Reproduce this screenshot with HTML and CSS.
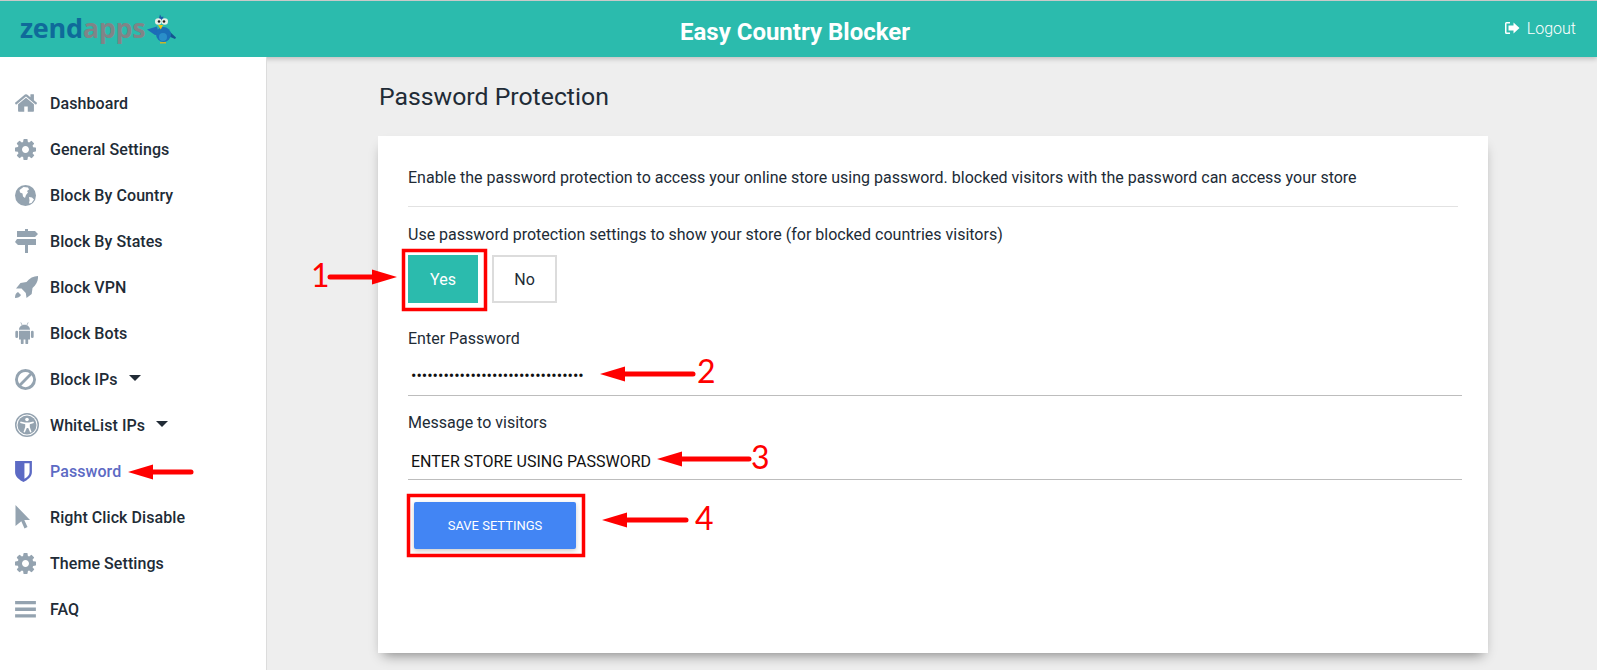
FILE: index.html
```html
<!DOCTYPE html>
<html lang="en">
<head>
    <meta charset="UTF-8">
    <meta name="viewport" content="width=device-width, initial-scale=1.0">
    <title>Easy Country Blocker</title>
    <link rel="stylesheet" href="styles.css">
</head>
<body>
    <header class="topbar">
        <a class="logo" href="#">
            <span class="logo-zend">zend</span><span class="logo-apps">apps</span>
            <svg class="logo-bird" viewBox="0 0 30 30" width="30" height="30">
                <path d="M14 .5l1.500 2.500 2-.5-1 3.500h-4z" fill="#1c5fa8"/>
                <path d="M1 15.500l10-3 2 8-4 .5z" fill="#1c6cb8"/>
                <path d="M22 16l8 7.500-1 1.500-9-4z" fill="#14548f"/>
                <ellipse cx="17.500" cy="20.500" rx="7.500" ry="7.500" fill="#1b6fb8"/>
                <ellipse cx="17" cy="23" rx="4" ry="4" fill="#2a8fc9"/>
                <path d="M14 28h6v1.500h-6z" fill="#c9b52a"/>
                <circle cx="12.300" cy="7.500" r="3.300" fill="#e8efe8"/>
                <circle cx="18.700" cy="7.500" r="3.300" fill="#e8efe8"/>
                <circle cx="13" cy="7.500" r="1.300" fill="#222"/>
                <circle cx="18" cy="7.500" r="1.300" fill="#222"/>
                <path d="M12 11h5l-2.200 4.500z" fill="#f1c40f"/>
            </svg>
        </a>
        <h1 class="app-title">Easy Country Blocker</h1>
        <a class="logout" href="#">
            <svg class="logout-icon" viewBox="0 0 16 14" width="16" height="14">
                <path d="M6 1H2.500A1.500 1.500 0 0 0 1 2.500v9A1.500 1.500 0 0 0 2.500 13H6v-1.500H2.500v-9H6z" fill="#fff"/>
                <path d="M9.500 1.500L15.500 7l-6 5.500V9.500H4.500v-5h5z" fill="#fff"/>
            </svg>
            Logout
        </a>
    </header>

    <div class="layout">
        <nav class="sidebar">
            <a class="nav-item" href="#">
                <svg class="nav-icon" width="22" height="18" viewBox="97 256 1598 1280"><path d="M1472 992v480q0 26-19 45t-45 19h-384v-384h-256v384h-384q-26 0-45-19t-19-45v-480q0-1 .5-3t.5-3l575-474 575 474q1 2 1 6zm223-69l-62 74q-8 9-21 11h-3q-13 0-21-7l-692-577-692 577q-12 8-24 7-13-2-21-11l-62-74q-8-10-7-23.500t11-21.500l719-599q32-26 76-26t76 26l244 204v-195q0-14 9-23t23-9h192q14 0 23 9t9 23v408l219 182q10 8 11 21.500t-7 23.500z"/></svg>
                Dashboard
            </a>
            <a class="nav-item" href="#">
                <svg class="nav-icon" width="21" height="21" viewBox="128 128 1536 1536"><path d="M1152 896q0-106-75-181t-181-75-181 75-75 181 75 181 181 75 181-75 75-181zm512-109v222q0 12-8 23t-20 13l-185 28q-19 54-39 91 35 50 107 138 10 12 10 25t-9 23q-27 37-99 108t-94 71q-12 0-26-9l-138-108q-44 23-91 38-16 136-29 186-7 28-36 28h-222q-14 0-24.500-8.500t-11.500-21.500l-28-184q-49-16-90-37l-141 107q-10 9-25 9-14 0-25-11-126-114-165-168-7-10-7-23 0-12 8-23 15-21 51-66.500t54-70.500q-27-50-41-99l-183-27q-13-2-21-12.500t-8-23.500v-222q0-12 8-23t19-13l186-28q14-46 39-92-40-57-107-138-10-12-10-24 0-10 9-23 26-36 98.500-107.500t94.500-71.500q13 0 26 10l138 107q44-23 91-38 16-136 29-186 7-28 36-28h222q14 0 24.500 8.500t11.500 21.500l28 184q49 16 90 37l142-107q9-9 24-9 13 0 25 10 129 119 165 170 7 8 7 22 0 12-8 23-15 21-51 66.500t-54 70.500q26 50 41 98l183 28q13 2 21 12.500t8 23.500z"/></svg>
                General Settings
            </a>
            <a class="nav-item" href="#">
                <svg class="nav-icon" width="21" height="21" viewBox="0 0 21 21"><circle cx="10.500" cy="10.500" r="10.500"/><path d="M4.500 5l4-3 4.500 .5 1 2-2 1.500 1 1.500-2 2.500-1 3-2-1.500-.5-3-2.500-1zM14 12l3 .5 2 2-2.500 3.500-2.500 .5.500-3z" fill="#fff"/></svg>
                Block By Country
            </a>
            <a class="nav-item" href="#">
                <svg class="nav-icon" width="23" height="24" viewBox="0 0 23 24"><path d="M10 0h3v2h7l3 3-3 3H2V2h8zM2 10h19v6H13v8h-3v-8H3l-3-3z"/></svg>
                Block By States
            </a>
            <a class="nav-item" href="#">
                <svg class="nav-icon" width="23" height="22" viewBox="0 0 23 22"><path d="M23 0c.3 4.500-1.500 8.500-5.500 12l-.8 6-5.200 4-.7-5L6.500 12.500 1 12.500 5.500 7l6-1C14.500 2 18.500 0 23 0zM0 22c0-3 .8-5 3-6l3 3c-1 2-3 3-6 3z"/></svg>
                Block VPN
            </a>
            <a class="nav-item" href="#">
                <svg class="nav-icon" width="19" height="22" viewBox="1 0 20 24"><path d="M5 8.500c0-3 2.500-5.500 6-5.500s6 2.500 6 5.500zM5 9.500h12V19h-2v4a1.500 1.500 0 0 1-3 0v-4h-2v4a1.500 1.500 0 0 1-3 0v-4H5zM2.500 9.500A1.500 1.500 0 0 1 4 11v5a1.500 1.500 0 0 1-3 0v-5a1.500 1.500 0 0 1 1.500-1.500zM19.500 9.500A1.500 1.500 0 0 1 21 11v5a1.500 1.500 0 0 1-3 0v-5a1.500 1.500 0 0 1 1.500-1.500z"/><path d="M7 .5l1.500 3M15 .5l-1.500 3" stroke="#94a3b0" stroke-width=".8"/></svg>
                Block Bots
            </a>
            <a class="nav-item" href="#">
                <svg class="nav-icon" width="21" height="21" viewBox="0.500 0.500 21 21"><path fill-rule="evenodd" d="M11 .5a10.500 10.500 0 1 0 0 21 10.500 10.500 0 0 0 0-21zm0 3a7.500 7.500 0 0 1 4.200 1.300L4.800 15.200A7.500 7.500 0 0 1 11 3.500zm6.200 3.300A7.500 7.500 0 0 1 6.800 17.200z"/></svg>
                Block IPs
                <span class="caret"></span>
            </a>
            <a class="nav-item" href="#">
                <svg class="nav-icon" width="24" height="24" viewBox="0 0 24 24"><path fill-rule="evenodd" d="M12 0a12 12 0 1 0 0 24 12 12 0 0 0 0-24zm0 1.500a10.500 10.500 0 1 1 0 21 10.500 10.500 0 0 1 0-21z"/><circle cx="12" cy="12" r="9.500"/><circle cx="12" cy="6.500" r="1.800" fill="#fff"/><path d="M5.500 8.500l4.500 1h4l4.500-1 .4 1.400-4.100 1.300V14l1.700 5-1.300.5-2-4.500h-1.400l-2 4.500-1.300-.5 1.700-5v-2.800L5.100 9.900z" fill="#fff"/></svg>
                WhiteList IPs
                <span class="caret"></span>
            </a>
            <a class="nav-item active" href="#">
                <svg class="nav-icon" width="17" height="21" viewBox="1 1 18 22.500"><path fill-rule="evenodd" d="M1 1h18v12c0 5-5 8.500-9 10.500C6 21.500 1 18 1 13zm10 2.500V20c3-1.700 5.500-4 5.500-7V3.500z"/></svg>
                Password
            </a>
            <a class="nav-item" href="#">
                <svg class="nav-icon" width="16" height="24" viewBox="1 0 15 24"><path d="M1 0l14.500 15H9.800l3.200 7-3 1.500-3.200-7.300L1 21z"/></svg>
                Right Click Disable
            </a>
            <a class="nav-item" href="#">
                <svg class="nav-icon" width="21" height="21" viewBox="128 128 1536 1536"><path d="M1152 896q0-106-75-181t-181-75-181 75-75 181 75 181 181 75 181-75 75-181zm512-109v222q0 12-8 23t-20 13l-185 28q-19 54-39 91 35 50 107 138 10 12 10 25t-9 23q-27 37-99 108t-94 71q-12 0-26-9l-138-108q-44 23-91 38-16 136-29 186-7 28-36 28h-222q-14 0-24.500-8.500t-11.500-21.500l-28-184q-49-16-90-37l-141 107q-10 9-25 9-14 0-25-11-126-114-165-168-7-10-7-23 0-12 8-23 15-21 51-66.500t54-70.500q-27-50-41-99l-183-27q-13-2-21-12.500t-8-23.500v-222q0-12 8-23t19-13l186-28q14-46 39-92-40-57-107-138-10-12-10-24 0-10 9-23 26-36 98.500-107.500t94.500-71.500q13 0 26 10l138 107q44-23 91-38 16-136 29-186 7-28 36-28h222q14 0 24.500 8.500t11.500 21.500l28 184q49 16 90 37l142-107q9-9 24-9 13 0 25 10 129 119 165 170 7 8 7 22 0 12-8 23-15 21-51 66.500t-54 70.500q26 50 41 98l183 28q13 2 21 12.500t8 23.500z"/></svg>
                Theme Settings
            </a>
            <a class="nav-item" href="#">
                <svg class="nav-icon" width="21" height="17" viewBox="0 0 22 18"><path d="M0 0h22v3.500H0zM0 7h22v3.500H0zM0 14h22v3.500H0z"/></svg>
                FAQ
            </a>
        </nav>

        <main class="content">
            <div class="container">
                <h2 class="page-title">Password Protection</h2>
                <section class="card">
                    <p class="intro">Enable the password protection to access your online store using password. blocked visitors with the password can access your store</p>
                    <hr class="divider">
                    <p class="field-label">Use password protection settings to show your store (for blocked countries visitors)</p>
                    <div class="toggle-group">
                        <button class="toggle toggle-on">Yes</button>
                        <button class="toggle">No</button>
                    </div>
                    <label class="field-label" for="password">Enter Password</label>
                    <input class="field-input password-input" id="password" type="password" value="********************************">
                    <label class="field-label" for="message">Message to visitors</label>
                    <input class="field-input" id="message" type="text" value="ENTER STORE USING PASSWORD">
                    <button class="save-btn">SAVE SETTINGS</button>
                </section>
            </div>
        </main>
    </div>

    <!-- red callouts drawn on top of the screenshot -->
    <svg class="callouts" viewBox="0 0 1597 670" width="1597" height="670">
        <g fill="none" stroke="#f00" stroke-width="3.500">
            <rect x="403.500" y="250.500" width="82" height="59"/>
            <rect x="408.500" y="495.500" width="175" height="60"/>
        </g>
        <g fill="#f00">
            <path d="M128 472l25-7.500v15z"/>
            <path d="M397 277l-25-7.500v15z"/>
            <path d="M600 374l25-7.500v15z"/>
            <path d="M657 459l25-7.500v15z"/>
            <path d="M602 520l25-7.500v15z"/>
        </g>
        <g stroke="#f00" stroke-width="5" stroke-linecap="round">
            <line x1="150" y1="472" x2="191" y2="472"/>
            <line x1="330" y1="277" x2="375" y2="277"/>
            <line x1="622" y1="374" x2="693" y2="374"/>
            <line x1="679" y1="459" x2="749" y2="459"/>
            <line x1="624" y1="520" x2="686" y2="520"/>
        </g>
        <g fill="#f00" font-family="'Lato', sans-serif" font-size="32">
            <text x="311" y="287">1</text>
            <text x="697" y="383">2</text>
            <text x="751" y="469">3</text>
            <text x="695" y="530">4</text>
        </g>
    </svg>
</body>
</html>
```

FILE: styles.css
```css
* {
    box-sizing: border-box;
}

html, body {
    height: 100%;
    margin: 0;
    overflow: hidden;
}

body {
    font-family: 'Roboto', sans-serif;
    background-color: #eee;
    color: #212b36;
    font-size: 16px;
}

a {
    text-decoration: none;
    color: inherit;
}

.topbar {
    height: 57px;
    background-color: #2bbbad;
    border-top: 1px solid #c9c9c9;
    display: flex;
    align-items: center;
    justify-content: space-between;
    padding: 0 21px 0 20px;
    box-shadow: 0 2px 5px rgba(0, 0, 0, 0.2);
    position: relative;
}

.logo {
    display: flex;
    align-items: center;
    font-family: 'Open Sans', sans-serif;
    font-weight: 700;
    font-size: 27px;
    letter-spacing: -0.3px;
    width: 194px;
    margin-top: -4px;
}

.logo-zend {
    color: #0f6a9a;
}

.logo-apps {
    color: #808487;
}

.logo-bird {
    margin-left: 1px;
    margin-top: 4px;
}

.app-title {
    margin: 0;
    padding-top: 5px;
    color: #fff;
    font-size: 24px;
    font-weight: 700;
    flex: 1;
    text-align: center;
}

.logout {
    width: 200px;
    display: flex;
    align-items: center;
    justify-content: flex-end;
    gap: 7px;
    color: #fff;
    font-size: 16px;
    font-weight: 300;
    margin-top: -2px;
}

.layout {
    display: flex;
    height: calc(100% - 57px);
}

.sidebar {
    width: 267px;
    flex-shrink: 0;
    background-color: #fff;
    border-right: 1px solid #dcdcdc;
    padding-top: 23px;
    position: relative;
}

.nav-item {
    display: grid;
    grid-template-columns: 35px auto auto;
    justify-content: start;
    align-items: center;
    height: 46px;
    padding-left: 15px;
    font-size: 16px;
    font-weight: 500;
    letter-spacing: 0.07px;
    color: #212b36;
}

.nav-icon {
    fill: #94a3b0;
}

.nav-item.active {
    color: #5c6ac4;
}

.nav-item.active .nav-icon {
    fill: #5c6ac4;
}

.caret {
    width: 0;
    height: 0;
    margin-left: 11px;
    margin-bottom: 2px;
    border-left: 6px solid transparent;
    border-right: 6px solid transparent;
    border-top: 6px solid #212b36;
}

.content {
    flex: 1;
    overflow: hidden;
    padding-left: 2px;
}

.container {
    width: 1110px;
    margin: 0 auto;
}

.page-title {
    margin: 0;
    padding: 25px 0 0 1px;
    height: 79px;
    font-size: 24.800px;
    line-height: 29px;
    font-weight: 400;
    color: #212b36;
}

.card {
    background-color: #fff;
    height: 517px;
    padding: 32px 30px;
    box-shadow: 0 7px 12px -5px rgba(0, 0, 0, 0.45);
}

.intro {
    margin: 0;
    line-height: 19px;
}

.divider {
    border: none;
    border-top: 1px solid #e2e2e2;
    margin: 19px 0 18px;
}

.field-label {
    display: block;
    margin: 0;
    line-height: 20px;
}

.toggle-group {
    display: flex;
    gap: 14px;
    margin: 10px 0 26px;
}

.toggle {
    height: 48px;
    width: 65px;
    background-color: #fff;
    border: 2px solid #dcdcdc;
    font-family: inherit;
    font-size: 16px;
    color: #212b36;
}

.toggle-on {
    width: 70px;
    background-color: #2bbbad;
    border-color: #2bbbad;
    color: #fff;
}

.field-input {
    display: block;
    width: 1054px;
    height: 47px;
    border: none;
    border-bottom: 1px solid #bdbdbd;
    outline: none;
    padding: 10px 3px 0;
    font-family: inherit;
    font-size: 16px;
    color: #111;
    margin-bottom: 17px;
}

.password-input {
    padding-top: 6px;
}

.save-btn {
    display: block;
    width: 162px;
    height: 47px;
    margin: 22px 0 0 6px;
    background-color: #4285f4;
    border: none;
    border-radius: 2px;
    color: #fff;
    font-family: inherit;
    font-size: 12.960px;
    font-weight: 400;
    box-shadow: 0 2px 5px rgba(0, 0, 0, 0.2);
}

.callouts {
    position: absolute;
    top: 0;
    left: 0;
    pointer-events: none;
}
```
